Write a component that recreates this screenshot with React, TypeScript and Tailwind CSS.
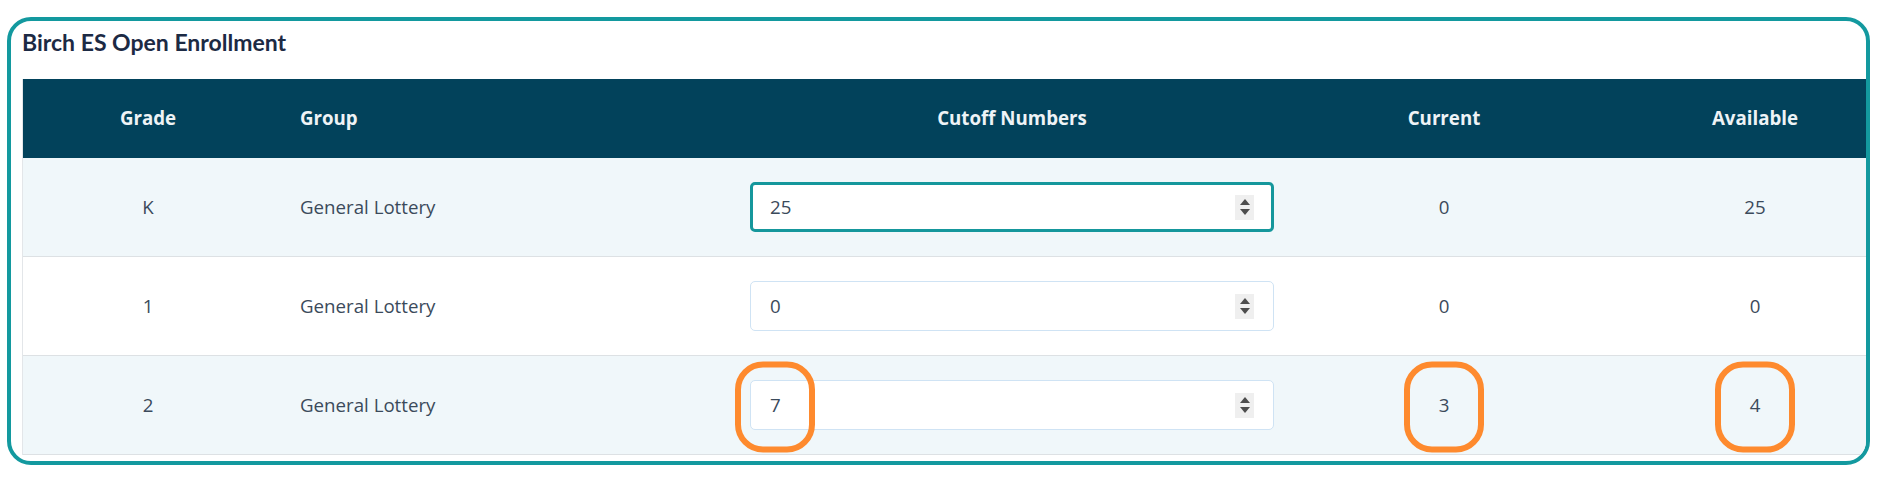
const rows = [
  { grade: "K", group: "General Lottery", cutoff: "25", current: "0", available: "25", focused: true, striped: true, marked: false },
  { grade: "1", group: "General Lottery", cutoff: "0", current: "0", available: "0", focused: false, striped: false, marked: false },
  { grade: "2", group: "General Lottery", cutoff: "7", current: "3", available: "4", focused: false, striped: true, marked: true },
];

function Mark() {
  // orange highlight ring drawn over the value
  return (
    <span className="pointer-events-none absolute left-1/2 top-[calc(50%+2px)] h-[91px] w-[80px] -translate-x-1/2 -translate-y-1/2 rounded-[28px] border-[6px] border-[#fe8a2e]" />
  );
}

function Value({ text, marked }: { text: string; marked: boolean }) {
  return (
    <span className="relative inline-block">
      {text}
      {marked && <Mark />}
    </span>
  );
}

function Spinner() {
  return (
    <div className="flex h-[25px] w-[19px] flex-col items-center justify-center gap-[4px] bg-[#efefef]">
      <svg width="10" height="6" viewBox="0 0 10 6">
        <path d="M5 0 L10 6 L0 6 Z" fill="#4d4d4d" />
      </svg>
      <svg width="10" height="6" viewBox="0 0 10 6">
        <path d="M0 0 L10 0 L5 6 Z" fill="#4d4d4d" />
      </svg>
    </div>
  );
}

function NumberBox({ value, focused, marked }: { value: string; focused: boolean; marked: boolean }) {
  return (
    <div
      className={
        focused
          ? "ml-[24px] flex h-[50px] w-[524px] items-center justify-between rounded-[5px] border-[3px] border-[#15979c] bg-white pl-[17px] pr-[17px]"
          : "ml-[24px] flex h-[50px] w-[524px] items-center justify-between rounded-[5px] border border-[#cfe3f4] bg-white pl-[19px] pr-[19px]"
      }
    >
      <Value text={value} marked={marked} />
      <Spinner />
    </div>
  );
}

export default function App() {
  return (
    <div className="min-h-screen bg-white pl-[7px] pt-[17px]" style={{ fontFamily: '"Open Sans", sans-serif' }}>
      <div className="h-[448px] w-[1863px] overflow-hidden rounded-[24px] border-4 border-[#13999f] bg-white pl-[11px] pt-[7px]">
        <h2 className="mb-[23px] h-[28px] text-[23px] font-bold leading-[28px] text-[#1c2a44]" style={{ fontFamily: "Lato, sans-serif" }}>
          Birch ES Open Enrollment
        </h2>

        <div className="w-[1897px] border-l border-[#e3e6e9]">
          <div className="grid h-[79px] grid-cols-[250px_453px_572px_292px_330px] items-center bg-[#02425b] text-[18.7px] font-bold text-[#eef3f6]">
            <div className="text-center">Grade</div>
            <div className="pl-[27px]">Group</div>
            <div className="text-center">Cutoff Numbers</div>
            <div className="text-center">Current</div>
            <div className="text-center">Available</div>
          </div>

          {rows.map((r) => (
            <div
              key={r.grade}
              className={
                r.striped
                  ? "grid h-[99px] grid-cols-[250px_453px_572px_292px_330px] items-center border-b border-[#dde1e4] bg-[#f0f7fa] text-[18.7px] text-[#3b4a5b]"
                  : "grid h-[99px] grid-cols-[250px_453px_572px_292px_330px] items-center border-b border-[#dde1e4] bg-white text-[18.7px] text-[#3b4a5b]"
              }
            >
              <div className="text-center">{r.grade}</div>
              <div className="pl-[27px]">{r.group}</div>
              <div>
                <NumberBox value={r.cutoff} focused={r.focused} marked={r.marked} />
              </div>
              <div className="text-center">
                <Value text={r.current} marked={r.marked} />
              </div>
              <div className="text-center">
                <Value text={r.available} marked={r.marked} />
              </div>
            </div>
          ))}
        </div>
      </div>
    </div>
  );
}
